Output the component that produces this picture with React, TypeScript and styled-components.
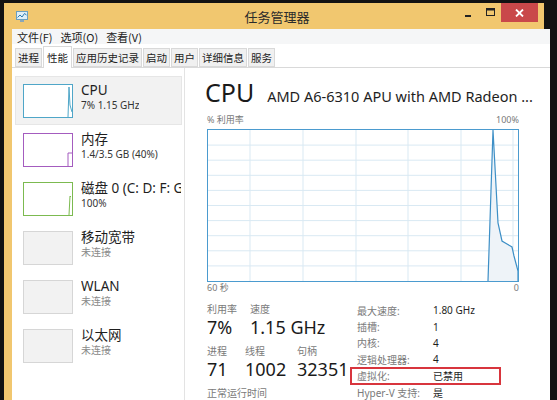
import React from 'react';
import styled, { createGlobalStyle } from 'styled-components';

const Global = createGlobalStyle`
  html, body { margin: 0; padding: 0; background: #121212; }
  body { font-family: "Noto Sans", "Noto Sans CJK SC", sans-serif; overflow: hidden; }
  * { box-sizing: border-box; }
`;

const Screen = styled.div`
  width: 557px;
  height: 400px;
  padding: 3px 0 0 4px;
  background: #121212;
  overflow: hidden;
`;

const Window = styled.div`
  width: 540px;
  height: 397px;
  background: #f1c76f;
  display: flex;
  flex-direction: column;
`;

const TitleBar = styled.div`
  height: 26px;
  display: grid;
  grid-template-columns: 1fr auto 1fr;
  align-items: center;
  padding: 0 6px 0 12px;
`;

const TitleText = styled.div`
  font-family: "Noto Sans CJK SC", sans-serif;
  font-size: 13px;
  color: #2b2b2b;
  padding-top: 1px;
`;

const Controls = styled.div`
  justify-self: end;
  align-self: start;
  display: flex;
  align-items: flex-start;
`;

const CtrlButton = styled.div<{ $close?: boolean }>`
  width: ${p => (p.$close ? '37px' : '22px')};
  height: 19px;
  display: flex;
  align-items: center;
  justify-content: center;
  background: ${p => (p.$close ? '#c9484a' : 'transparent')};
  color: ${p => (p.$close ? '#fff' : '#222')};
`;

const Frame = styled.div`
  flex: 1;
  padding: 0 8px;
  display: flex;
  min-height: 0;
`;

const Content = styled.div`
  flex: 1;
  background: #fff;
  display: flex;
  flex-direction: column;
  min-height: 0;
`;

const MenuBar = styled.div`
  height: 15px;
  background: #f5f6f7;
  display: flex;
  align-items: center;
  gap: 8px;
  padding-left: 5px;
  font-family: "Noto Sans CJK SC", sans-serif;
  font-size: 11px;
  color: #222;
`;

const TabRow = styled.div`
  height: 24px;
  display: flex;
  align-items: flex-end;
  gap: 1px;
  padding-left: 3px;
  border-bottom: 1px solid #d9d9d9;
`;

const Tab = styled.div<{ $active?: boolean }>`
  height: ${p => (p.$active ? '22px' : '19px')};
  margin-bottom: ${p => (p.$active ? '-1px' : '0')};
  padding: 0 ${p => (p.$active ? '3px' : '2px')};
  display: flex;
  align-items: center;
  border: 1px solid #d9d9d9;
  border-bottom: ${p => (p.$active ? 'none' : '1px solid #d9d9d9')};
  background: ${p => (p.$active ? '#fff' : '#f0f0f0')};
  font-family: "Noto Sans CJK SC", sans-serif;
  font-size: 10.5px;
  color: #222;
`;

const Body = styled.div`
  flex: 1;
  display: flex;
  min-height: 0;
`;

const Sidebar = styled.div`
  width: 173px;
  border-right: 1px solid #e3e3e3;
  padding: 8px 2px 0 3px;
  display: flex;
  flex-direction: column;
`;

const Item = styled.div<{ $selected?: boolean }>`
  height: 49px;
  display: flex;
  align-items: flex-start;
  gap: 8px;
  padding: 6px 0 0 7px;
  background: ${p => (p.$selected ? '#f2f2f2' : 'transparent')};
  border: 1px solid ${p => (p.$selected ? '#e6e6e6' : 'transparent')};
`;

const Thumb = styled.div<{ $color: string; $fill?: string }>`
  width: 50px;
  height: 34px;
  border: 1px solid ${p => p.$color};
  background: ${p => p.$fill || '#fff'};
  flex: none;
  margin-top: 1px;
  display: flex;
`;

const ItemText = styled.div`
  display: flex;
  flex-direction: column;
  white-space: nowrap;
  overflow: hidden;
  margin-top: -1px;
`;

const ItemTitle = styled.div`
  font-size: 13.5px;
  line-height: 16px;
  color: #1e1e1e;
`;

const ItemSub = styled.div<{ $muted?: boolean }>`
  font-size: 10px;
  line-height: 14px;
  color: ${p => (p.$muted ? '#8a8a8a' : '#333')};
`;

const Main = styled.div`
  flex: 1;
  padding: 9px 17px 0 22px;
  display: flex;
  flex-direction: column;
`;

const Header = styled.div`
  display: flex;
  align-items: baseline;
  gap: 13px;
  margin-left: -2px;
  white-space: nowrap;
`;

const BigTitle = styled.div`
  font-size: 25px;
  line-height: 30px;
  color: #1a1a1a;
`;

const Model = styled.div`
  font-size: 14.5px;
  color: #1e1e1e;
`;

const AxisRow = styled.div<{ $top?: number }>`
  width: 312px;
  display: flex;
  justify-content: space-between;
  font-size: 9px;
  line-height: 12px;
  color: #7a7a7a;
  margin-top: ${p => p.$top ?? 0}px;
  height: 12px;
`;

const Graph = styled.div`
  margin-top: 3px;
  width: 312px;
  height: 153px;
  border: 1px solid #4b9bcf;
`;

const Stats = styled.div`
  margin-top: 8px;
  display: flex;
`;

const LeftStats = styled.div`
  width: 150px;
  display: flex;
  flex-direction: column;
`;

const StatRow = styled.div`
  display: flex;
`;

const StatCell = styled.div<{ $w: number }>`
  width: ${p => p.$w}px;
  display: flex;
  flex-direction: column;
  white-space: nowrap;
`;

const StatLabel = styled.div`
  font-family: "Noto Sans CJK SC", sans-serif;
  font-size: 10px;
  line-height: 14px;
  color: #7a7a7a;
`;

const StatValue = styled.div`
  font-size: 18px;
  line-height: 23px;
  color: #1a1a1a;
  margin-bottom: 5px;
`;

const InfoTable = styled.div`
  display: flex;
  flex-direction: column;
`;

const InfoRow = styled.div<{ $highlight?: boolean }>`
  position: relative;
  display: grid;
  grid-template-columns: 76px 60px;
  height: 16.4px;
  align-items: center;
  font-size: 10px;
  white-space: nowrap;
  &::after {
    content: '';
    display: ${p => (p.$highlight ? 'block' : 'none')};
    position: absolute;
    top: -1px;
    bottom: -1px;
    left: -7px;
    right: -8px;
    border: 2px solid #d8353d;
  }
`;

const InfoLabel = styled.div`
  color: #7a7a7a;
`;

const InfoValue = styled.div`
  color: #1e1e1e;
`;

const AppIcon = () => (
  <svg width="12" height="11" viewBox="0 0 12 11">
    <rect x="0.5" y="0.5" width="11" height="8" fill="#dfeef7" stroke="#6a9fbf" />
    <polyline points="1.5,6.5 4,4 6,6 8.5,2.5 10.5,4" fill="none" stroke="#2c7bb0" strokeWidth="1" />
    <rect x="4" y="9" width="4" height="2" fill="#8aa6b8" />
  </svg>
);

const MainGraph = () => {
  const w = 310;
  const h = 151;
  const vx = [42, 95, 148, 200, 253, 305];
  const hy = Array.from({ length: 9 }, (_, i) => ((i + 1) * h) / 10);
  const pts = '280,151 285,0 290,93 294,111 299,114 304,117 306,126 310,141 310,151';
  return (
    <svg width={w} height={h} viewBox={`0 0 ${w} ${h}`} style={{ display: 'block' }}>
      {vx.map(x => (
        <line key={x} x1={x} y1={0} x2={x} y2={h} stroke="#d9e9f3" strokeWidth="1" />
      ))}
      {hy.map(y => (
        <line key={y} x1={0} y1={y} x2={w} y2={y} stroke="#d9e9f3" strokeWidth="1" />
      ))}
      <polygon points={pts} fill="#eef3f8" />
      <polyline points={pts} fill="none" stroke="#3d8fc6" strokeWidth="1.2" />
    </svg>
  );
};

const Spark = ({ pts, color }: { pts: string; color: string }) => (
  <svg width="48" height="32" viewBox="0 0 48 32" style={{ display: 'block' }}>
    <polyline points={pts} fill="none" stroke={color} strokeWidth="1" />
  </svg>
);

const items = [
  { title: 'CPU', sub: '7% 1.15 GHz', color: '#4fa6c8', spark: '44,32 45,2 46,20 48,27', selected: true },
  { title: '内存', sub: '1.4/3.5 GB (40%)', color: '#a45cbf', spark: '44,32 44,19 48,19' },
  { title: '磁盘 0 (C: D: F: G', sub: '100%', color: '#7cba50', spark: '45,32 46,13 47,14' },
];

const netItems = ['移动宽带', 'WLAN', '以太网'];

const info: [string, string][] = [
  ['最大速度:', '1.80 GHz'],
  ['插槽:', '1'],
  ['内核:', '4'],
  ['逻辑处理器:', '4'],
  ['虚拟化:', '已禁用'],
  ['Hyper-V 支持:', '是'],
];

export default function App() {
  return (
    <>
      <Global />
      <Screen>
        <Window>
          <TitleBar>
            <AppIcon />
            <TitleText>任务管理器</TitleText>
            <Controls>
              <CtrlButton>
                <svg width="8" height="8" viewBox="0 0 8 8"><rect x="1" y="6" width="6" height="2" fill="#222" /></svg>
              </CtrlButton>
              <CtrlButton>
                <svg width="9" height="9" viewBox="0 0 9 9"><rect x="0.5" y="0.5" width="8" height="7" fill="none" stroke="#222" /><rect x="0.5" y="0.5" width="8" height="2" fill="#222" /></svg>
              </CtrlButton>
              <CtrlButton $close>
                <svg width="9" height="8" viewBox="0 0 9 8"><path d="M1 0.5 L8 7.5 M8 0.5 L1 7.5" stroke="#fff" strokeWidth="1.8" /></svg>
              </CtrlButton>
            </Controls>
          </TitleBar>
          <Frame>
            <Content>
              <MenuBar>
                <span>文件(F)</span>
                <span>选项(O)</span>
                <span>查看(V)</span>
              </MenuBar>
              <TabRow>
                <Tab>进程</Tab>
                <Tab $active>性能</Tab>
                <Tab>应用历史记录</Tab>
                <Tab>启动</Tab>
                <Tab>用户</Tab>
                <Tab>详细信息</Tab>
                <Tab>服务</Tab>
              </TabRow>
              <Body>
                <Sidebar>
                  {items.map(it => (
                    <Item key={it.title} $selected={it.selected}>
                      <Thumb $color={it.color}>
                        <Spark pts={it.spark} color={it.color} />
                      </Thumb>
                      <ItemText>
                        <ItemTitle>{it.title}</ItemTitle>
                        <ItemSub>{it.sub}</ItemSub>
                      </ItemText>
                    </Item>
                  ))}
                  {netItems.map(n => (
                    <Item key={n}>
                      <Thumb $color="#d6d6d6" $fill="#f2f2f2" />
                      <ItemText>
                        <ItemTitle>{n}</ItemTitle>
                        <ItemSub $muted>未连接</ItemSub>
                      </ItemText>
                    </Item>
                  ))}
                </Sidebar>
                <Main>
                  <Header>
                    <BigTitle>CPU</BigTitle>
                    <Model>AMD A6-6310 APU with AMD Radeon ...</Model>
                  </Header>
                  <AxisRow $top={7}>
                    <span>% 利用率</span>
                    <span>100%</span>
                  </AxisRow>
                  <Graph>
                    <MainGraph />
                  </Graph>
                  <AxisRow $top={0}>
                    <span>60 秒</span>
                    <span>0</span>
                  </AxisRow>
                  <Stats>
                    <LeftStats>
                      <StatRow>
                        <StatCell $w={43}>
                          <StatLabel>利用率</StatLabel>
                          <StatValue>7%</StatValue>
                        </StatCell>
                        <StatCell $w={100}>
                          <StatLabel>速度</StatLabel>
                          <StatValue>1.15 GHz</StatValue>
                        </StatCell>
                      </StatRow>
                      <StatRow>
                        <StatCell $w={38}>
                          <StatLabel>进程</StatLabel>
                          <StatValue>71</StatValue>
                        </StatCell>
                        <StatCell $w={52}>
                          <StatLabel>线程</StatLabel>
                          <StatValue>1002</StatValue>
                        </StatCell>
                        <StatCell $w={60}>
                          <StatLabel>句柄</StatLabel>
                          <StatValue>32351</StatValue>
                        </StatCell>
                      </StatRow>
                      <StatLabel>正常运行时间</StatLabel>
                    </LeftStats>
                    <InfoTable>
                      {info.map(([k, v]) => (
                        <InfoRow key={k} $highlight={k === '虚拟化:'}>
                          <InfoLabel>{k}</InfoLabel>
                          <InfoValue>{v}</InfoValue>
                        </InfoRow>
                      ))}
                    </InfoTable>
                  </Stats>
                </Main>
              </Body>
            </Content>
          </Frame>
        </Window>
      </Screen>
    </>
  );
}
